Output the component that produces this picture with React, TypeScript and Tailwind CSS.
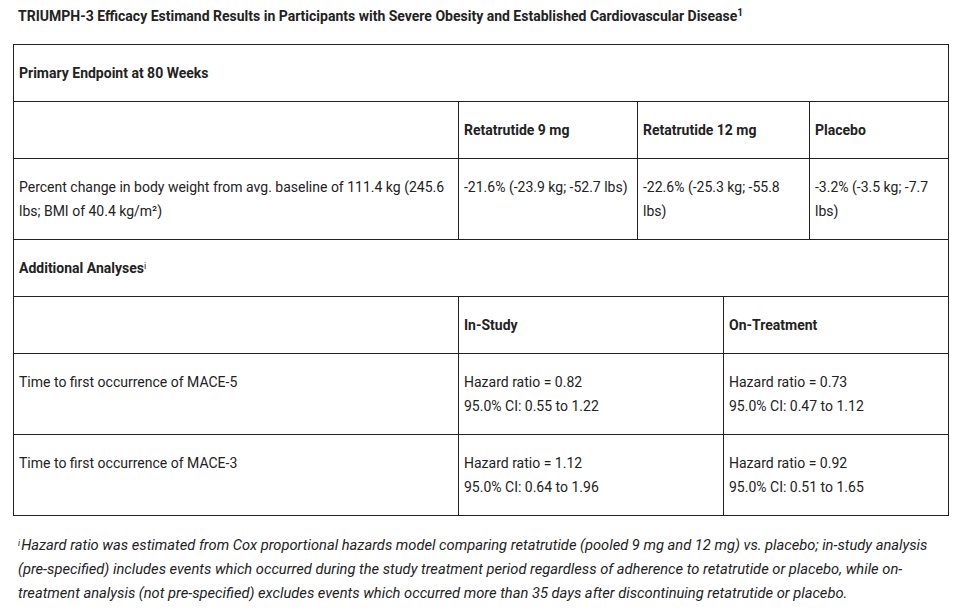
import React from "react";

const cell = "border border-[#222] px-[5px] py-4 align-top leading-6";

export default function App() {
  return (
    <div className="min-h-[610px] bg-white px-[13px] pt-[6px] text-[14px] text-[#222]" style={{ fontFamily: "Roboto, 'Liberation Sans', sans-serif" }}>
      <h2 className="pl-[5px] text-[14px] font-bold leading-5">
        TRIUMPH-3 Efficacy Estimand Results in Participants with Severe Obesity and Established Cardiovascular Disease
        <sup className="text-[10px]">1</sup>
      </h2>
      <table className="mt-[18px] w-[936px] table-fixed border-collapse">
        <colgroup>
          <col className="w-[445px]" />
          <col className="w-[179px]" />
          <col className="w-[172px]" />
          <col />
        </colgroup>
        <tbody>
          <tr>
            <td colSpan={4} className={cell + " font-bold"}>Primary Endpoint at 80 Weeks</td>
          </tr>
          <tr>
            <td className={cell}></td>
            <td className={cell + " font-bold"}>Retatrutide 9 mg</td>
            <td className={cell + " font-bold"}>Retatrutide 12 mg</td>
            <td className={cell + " font-bold"}>Placebo</td>
          </tr>
          <tr>
            <td className={cell}>Percent change in body weight from avg. baseline of 111.4 kg (245.6 lbs; BMI of 40.4 kg/m²)</td>
            <td className={cell}>-21.6% (-23.9 kg; -52.7 lbs)</td>
            <td className={cell}>-22.6% (-25.3 kg; -55.8 lbs)</td>
            <td className={cell}>-3.2% (-3.5 kg; -7.7 lbs)</td>
          </tr>
        </tbody>
      </table>
      <table className="-mt-px w-[936px] table-fixed border-collapse">
        <colgroup>
          <col className="w-[445px]" />
          <col className="w-[265px]" />
          <col />
        </colgroup>
        <tbody>
          <tr>
            <td colSpan={3} className={cell + " font-bold"}>
              Additional Analyses<sup className="text-[9px] font-normal">i</sup>
            </td>
          </tr>
          <tr>
            <td className={cell}></td>
            <td className={cell + " font-bold"}>In-Study</td>
            <td className={cell + " font-bold"}>On-Treatment</td>
          </tr>
          <tr>
            <td className={cell}>Time to first occurrence of MACE-5</td>
            <td className={cell}>Hazard ratio = 0.82<br />95.0% CI: 0.55 to 1.22</td>
            <td className={cell}>Hazard ratio = 0.73<br />95.0% CI: 0.47 to 1.12</td>
          </tr>
          <tr>
            <td className={cell}>Time to first occurrence of MACE-3</td>
            <td className={cell}>Hazard ratio = 1.12<br />95.0% CI: 0.64 to 1.96</td>
            <td className={cell}>Hazard ratio = 0.92<br />95.0% CI: 0.51 to 1.65</td>
          </tr>
        </tbody>
      </table>
      <p className="mt-[17px] pl-[5px] pr-[10px] text-[14.7px] italic leading-6">
        <sup className="mr-px text-[9px]">i</sup>Hazard ratio was estimated from Cox proportional hazards model comparing retatrutide (pooled 9 mg and 12 mg) vs. placebo; in-study analysis (pre-specified) includes events which occurred during the study treatment period regardless of adherence to retatrutide or placebo, while on-treatment analysis (not pre-specified) excludes events which occurred more than 35 days after discontinuing retatrutide or placebo.
      </p>
    </div>
  );
}
